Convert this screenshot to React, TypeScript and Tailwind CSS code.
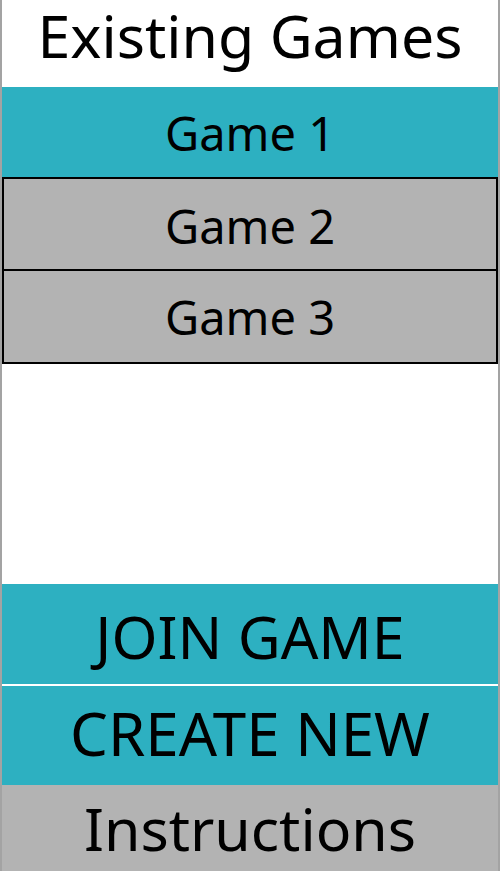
import React from "react";

export default function App() {
  const font = { fontFamily: '"Noto Sans", sans-serif' };
  return (
    <div
      className="w-[500px] h-[871px] overflow-hidden border-x-2 border-[#a3a3a3] bg-white flex flex-col text-black"
      style={font}
    >
      <div className="h-[87px] shrink-0 text-center text-[59px] leading-[71px]">
        Existing Games
      </div>
      <div className="h-[90px] shrink-0 bg-[#2db0c1] flex items-center justify-center text-[47px] leading-none pt-[2px]">
        Game 1
      </div>
      <div className="h-[94px] shrink-0 bg-[#b3b3b3] border-2 border-black flex items-center justify-center text-[47px] leading-none pt-[4px]">
        Game 2
      </div>
      <div className="h-[93px] shrink-0 bg-[#b3b3b3] border-2 border-t-0 border-black flex items-center justify-center text-[47px] leading-none pt-[2px]">
        Game 3
      </div>
      <div className="h-[220px] shrink-0" />
      <div className="h-[100px] shrink-0 bg-[#2db0c1] flex items-center justify-center text-[59px] leading-none pt-[4px]">
        JOIN GAME
      </div>
      <div className="h-[2px] shrink-0 bg-white" />
      <div className="h-[99px] shrink-0 bg-[#2db0c1] flex items-center justify-center text-[60px] leading-none pb-[6px]">
        CREATE NEW
      </div>
      <div className="h-[86px] shrink-0 bg-[#b3b3b3] flex items-center justify-center text-[59px] leading-none">
        Instructions
      </div>
    </div>
  );
}
